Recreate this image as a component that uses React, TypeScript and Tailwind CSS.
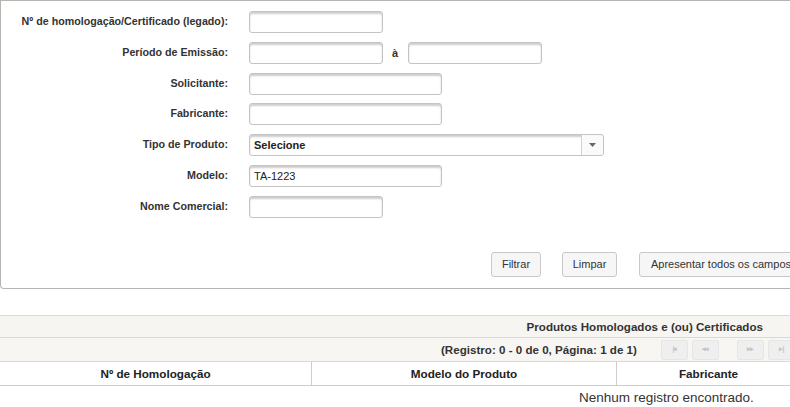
import React from 'react';

const font = { fontFamily: '"Liberation Sans", Arial, sans-serif' };

const inputCls =
  'h-[22px] rounded-[3px] border border-[#c4c4c4] bg-white shadow-[inset_0_2px_2px_rgba(0,0,0,0.2)] px-[4px] text-[11px] text-[#222] outline-none';

const btnCls =
  'h-[25px] rounded-[3px] border border-[#c8c8c8] bg-[#f6f6f6] text-[11px] text-[#333] whitespace-nowrap shrink-0';

function Field({ label, children }: { label: string; children: React.ReactNode }) {
  return (
    <div className="flex items-center h-[22px]">
      <label className="w-[228px] shrink-0 text-right text-[10.7px] font-bold text-[#333] pr-[1px] whitespace-nowrap -translate-y-[1px]">{label}</label>
      <div className="ml-[20px] flex items-center">{children}</div>
    </div>
  );
}

function PagerBtn({ glyph }: { glyph: string }) {
  return (
    <div className="w-[27px] h-[20px] shrink-0 rounded-[2px] bg-[#efefef] border border-[#e6e6e6] flex items-center justify-center text-[7px] text-[#c4c4c4] tracking-[-1px]">
      {glyph}
    </div>
  );
}

export default function App() {
  return (
    <div className="w-[790px] h-[407px] overflow-hidden bg-white" style={font}>
      {/* Filter panel */}
      <div className="w-[830px] h-[289px] border-t border-l border-b border-[#b5b5b0] rounded-bl-[4px] flex flex-col pt-[10px]">
        <div className="flex flex-col gap-[8.8px]">
          <Field label="Nº de homologação/Certificado (legado):">
            <input className={`${inputCls} w-[134px]`} />
          </Field>
          <Field label="Período de Emissão:">
            <input className={`${inputCls} w-[134px]`} />
            <span className="ml-[9px] mr-[10px] text-[11px] font-bold text-[#333]">à</span>
            <input className={`${inputCls} w-[134px]`} />
          </Field>
          <Field label="Solicitante:">
            <input className={`${inputCls} w-[193px]`} />
          </Field>
          <Field label="Fabricante:">
            <input className={`${inputCls} w-[193px]`} />
          </Field>
          <Field label="Tipo de Produto:">
            <div className={`${inputCls} w-[355px] flex items-center !px-0`}>
              <span className="flex-1 pl-[4px] font-bold text-[11px] text-[#222]">Selecione</span>
              <div className="w-[22px] h-full border-l border-[#d4d4d4] flex items-center justify-center bg-[#fafafa] rounded-r-[3px]">
                <svg width="7" height="4" viewBox="0 0 7 4">
                  <path d="M0 0h7L3.5 4z" fill="#666" />
                </svg>
              </div>
            </div>
          </Field>
          <Field label="Modelo:">
            <input className={`${inputCls} w-[193px]`} defaultValue="TA-1223" />
          </Field>
          <Field label="Nome Comercial:">
            <input className={`${inputCls} w-[134px]`} />
          </Field>
        </div>

        <div className="flex mt-[34px] pl-[490px]">
          <button className={`${btnCls} w-[50px]`}>Filtrar</button>
          <button className={`${btnCls} w-[55px] ml-[21px]`}>Limpar</button>
          <button className={`${btnCls} px-[11px] ml-[22px]`}>Apresentar todos os campos</button>
        </div>
      </div>

      {/* Results table */}
      <div className="w-[800px] mt-[26px]">
        <div className="h-[23px] bg-[#f7f5f1] border-t border-b border-[#dcd8d2] flex items-center justify-end pr-[37px] text-[11.6px] font-bold text-[#333] whitespace-nowrap">
          Produtos Homologados e (ou) Certificados
        </div>
        <div className="h-[24px] bg-[#f8f6f3] border-b border-[#dcd8d2] flex items-center pl-[441px] text-[11.6px] font-bold text-[#333]">
          <span className="whitespace-nowrap shrink-0">(Registro: 0 - 0 de 0, Página: 1 de 1)</span>
          <div className="flex ml-[24px] gap-[4px] shrink-0">
            <PagerBtn glyph="|◂" />
            <PagerBtn glyph="◂◂" />
          </div>
          <div className="flex ml-[18px] gap-[4px] shrink-0">
            <PagerBtn glyph="▸▸" />
            <PagerBtn glyph="▸|" />
          </div>
        </div>
        <div className="h-[24px] bg-white border-b border-[#d0cdc8] flex text-[11.7px] font-bold text-[#222]">
          <div className="w-[312px] flex items-center justify-center border-r border-[#d0cdc8]">Nº de Homologação</div>
          <div className="w-[305px] flex items-center justify-center border-r border-[#d0cdc8]">Modelo do Produto</div>
          <div className="flex-1 flex items-center justify-center">Fabricante</div>
        </div>
        <div className="pl-[579px] pt-[2px] text-[13.5px] text-[#333] whitespace-nowrap">Nenhum registro encontrado.</div>
      </div>
    </div>
  );
}
